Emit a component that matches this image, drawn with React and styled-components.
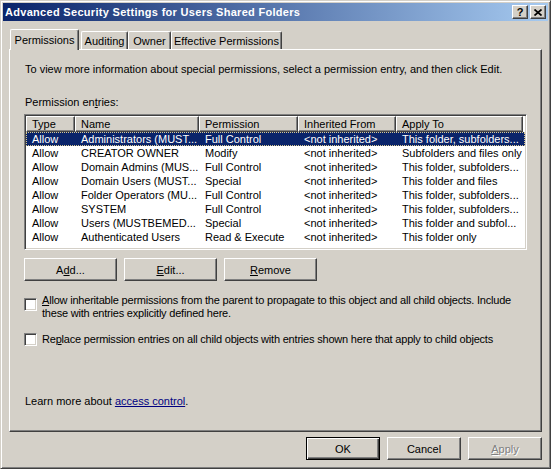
import React from "react";
import styled, { createGlobalStyle } from "styled-components";

const Global = createGlobalStyle`
  * { box-sizing: border-box; }
  body {
    margin: 0;
    background: #d4d0c8;
    font-family: "Liberation Sans", Arial, sans-serif;
    font-size: 11px;
    color: #000;
  }
`;

const face = "#d4d0c8";

const Window = styled.div`
  width: 551px;
  height: 469px;
  display: flex;
  flex-direction: column;
  background: ${face};
  border: 1px solid;
  border-color: ${face} #404040 #404040 ${face};
  box-shadow: inset 1px 1px #fff, inset -1px -1px #808080;
  padding: 2px;
`;

const TitleBar = styled.div`
  height: 18px;
  display: flex;
  align-items: center;
  padding: 0 2px 0 2px;
  background: linear-gradient(to right, #0a246a, #a6caf0);
`;

const Title = styled.div`
  flex: 1;
  color: #fff;
  font-weight: bold;
  font-size: 11px;
  letter-spacing: 0.3px;
  white-space: nowrap;
`;

const CaptionButton = styled.div`
  width: 16px;
  height: 14px;
  margin-left: ${(p) => (p.$gap ? "2px" : "0")};
  display: flex;
  align-items: center;
  justify-content: center;
  background: ${face};
  border: 1px solid;
  border-color: #fff #404040 #404040 #fff;
  box-shadow: inset -1px -1px #808080;
  font-weight: bold;
  font-size: 11px;
  line-height: 1;
`;

const Client = styled.div`
  flex: 1;
  display: flex;
  flex-direction: column;
  padding: 8px 6px 6px 6px;
`;

const TabStrip = styled.div`
  height: 20px;
  display: flex;
  align-items: flex-end;
  padding-left: 1px;
`;

const Tab = styled.div`
  position: relative;
  z-index: ${(p) => (p.$active ? 2 : 1)};
  width: ${(p) => p.$w}px;
  height: ${(p) => (p.$active ? 21 : 18)}px;
  margin-bottom: ${(p) => (p.$active ? "-1px" : "0")};
  margin-right: ${(p) => (p.$active ? "2px" : "0")};
  display: flex;
  align-items: center;
  justify-content: center;
  padding-bottom: ${(p) => (p.$active ? "1px" : "0")};
  background: ${face};
  border: 1px solid;
  border-bottom: none;
  border-color: #fff #404040 #404040 #fff;
  border-radius: 2px 2px 0 0;
  box-shadow: inset -1px 0 #808080;
  white-space: nowrap;
`;

const Panel = styled.div`
  height: 383px;
  display: flex;
  flex-direction: column;
  align-items: flex-start;
  padding: 13px 0 0 14px;
  border: 1px solid;
  border-color: #fff #404040 #404040 #fff;
  box-shadow: inset -1px -1px #808080;
`;

const Text = styled.div`
  line-height: 13px;
  margin-top: ${(p) => p.$mt || 0}px;
  padding-left: 1px;
  white-space: nowrap;
`;

const Key = styled.span`
  text-decoration: underline;
`;

const ListBox = styled.div`
  width: 503px;
  height: 136px;
  margin-top: 5px;
  background: #fff;
  border: 1px solid;
  border-color: #808080 #fff #fff #808080;
  box-shadow: inset 1px 1px #404040, inset -1px -1px ${face};
  padding: 1px;
`;

const cols = "49px 124px 99px 98px 127px";

const Header = styled.div`
  display: grid;
  grid-template-columns: ${cols};
  height: 16px;
`;

const HeaderCell = styled.div`
  background: ${face};
  border: 1px solid;
  border-color: #fff #404040 #404040 #fff;
  box-shadow: inset -1px -1px #808080;
  padding-left: 5px;
  line-height: 14px;
  white-space: nowrap;
  overflow: hidden;
`;

const Row = styled.div`
  display: grid;
  grid-template-columns: ${cols};
  height: 14px;
  line-height: 14px;
  background: ${(p) => (p.$selected ? "#0a246a" : "transparent")};
  color: ${(p) => (p.$selected ? "#fff" : "#000")};
  outline: ${(p) => (p.$selected ? "1px dotted #d8c890" : "none")};
  outline-offset: -1px;
`;

const Cell = styled.div`
  padding-left: 6px;
  white-space: nowrap;
  overflow: hidden;
`;

const ButtonRow = styled.div`
  display: flex;
  gap: 7px;
  margin-top: 8px;
`;

const Button = styled.div`
  width: ${(p) => p.$w}px;
  height: 23px;
  display: flex;
  align-items: center;
  justify-content: center;
  background: ${face};
  border: 1px solid;
  border-color: ${(p) => (p.$default ? "#000" : "#fff #404040 #404040 #fff")};
  box-shadow: ${(p) =>
    p.$default
      ? "inset 1px 1px #fff, inset -1px -1px #404040, inset -2px -2px #808080"
      : "inset -1px -1px #808080"};
  color: ${(p) => (p.$disabled ? "#808080" : "#000")};
  text-shadow: ${(p) => (p.$disabled ? "1px 1px #fff" : "none")};
  white-space: nowrap;
`;

const CheckRow = styled.div`
  display: flex;
  align-items: flex-start;
  gap: 5px;
  margin-top: ${(p) => p.$mt}px;
`;

const CheckBox = styled.div`
  flex: none;
  width: 13px;
  height: 13px;
  margin-top: ${(p) => p.$mt || 0}px;
  background: #fff;
  border: 1px solid;
  border-color: #808080 #fff #fff #808080;
  box-shadow: inset 1px 1px #404040, inset -1px -1px ${face};
`;

const CheckLabel = styled.div`
  line-height: 13px;
  letter-spacing: -0.2px;
  white-space: nowrap;
`;

const Link = styled.span`
  color: #000080;
  text-decoration: underline;
`;

const Footer = styled.div`
  display: flex;
  justify-content: flex-end;
  gap: 7px;
  margin-top: 5px;
`;

const rows = [
  ["Allow", "Administrators (MUST...", "Full Control", "<not inherited>", "This folder, subfolders..."],
  ["Allow", "CREATOR OWNER", "Modify", "<not inherited>", "Subfolders and files only"],
  ["Allow", "Domain Admins (MUS...", "Full Control", "<not inherited>", "This folder, subfolders..."],
  ["Allow", "Domain Users (MUST...", "Special", "<not inherited>", "This folder and files"],
  ["Allow", "Folder Operators (MU...", "Full Control", "<not inherited>", "This folder, subfolders..."],
  ["Allow", "SYSTEM", "Full Control", "<not inherited>", "This folder, subfolders..."],
  ["Allow", "Users (MUSTBEMED...", "Special", "<not inherited>", "This folder and subfol..."],
  ["Allow", "Authenticated Users", "Read & Execute", "<not inherited>", "This folder only"],
];

const CloseGlyph = () => (
  <svg width="8" height="7" viewBox="0 0 8 7">
    <path d="M0.5 0.5 L7.5 6.5 M7.5 0.5 L0.5 6.5" stroke="#000" strokeWidth="1.7" />
  </svg>
);

export default function App() {
  return (
    <>
      <Global />
      <Window>
        <TitleBar>
          <Title>Advanced Security Settings for Users Shared Folders</Title>
          <CaptionButton>?</CaptionButton>
          <CaptionButton $gap>
            <CloseGlyph />
          </CaptionButton>
        </TitleBar>
        <Client>
          <TabStrip>
            <Tab $active $w={69}>Permissions</Tab>
            <Tab $w={47}>Auditing</Tab>
            <Tab $w={43}>Owner</Tab>
            <Tab $w={111}>Effective Permissions</Tab>
          </TabStrip>
          <Panel>
            <Text>
              To view more information about special permissions, select a permission entry, and then click Edit.
            </Text>
            <Text $mt={20}>
              Permission en<Key>t</Key>ries:
            </Text>
            <ListBox>
              <Header>
                <HeaderCell>Type</HeaderCell>
                <HeaderCell>Name</HeaderCell>
                <HeaderCell>Permission</HeaderCell>
                <HeaderCell>Inherited From</HeaderCell>
                <HeaderCell>Apply To</HeaderCell>
              </Header>
              {rows.map((r, i) => (
                <Row key={i} $selected={i === 0}>
                  {r.map((c, j) => (
                    <Cell key={j}>{c}</Cell>
                  ))}
                </Row>
              ))}
            </ListBox>
            <ButtonRow>
              <Button $w={93}>
                A<Key>d</Key>d...
              </Button>
              <Button $w={93}>
                <Key>E</Key>dit...
              </Button>
              <Button $w={93}>
                <Key>R</Key>emove
              </Button>
            </ButtonRow>
            <CheckRow $mt={13}>
              <CheckBox $mt={4} />
              <CheckLabel>
                <Key>A</Key>llow inheritable permissions from the parent to propagate to this object and all child objects. Include
                <br />
                these with entries explicitly defined here.
              </CheckLabel>
            </CheckRow>
            <CheckRow $mt={13}>
              <CheckBox />
              <CheckLabel>
                Re<Key>p</Key>lace permission entries on all child objects with entries shown here that apply to child objects
              </CheckLabel>
            </CheckRow>
            <Text $mt={49}>
              Learn more about <Link>access control</Link>.
            </Text>
          </Panel>
          <Footer>
            <Button $w={74} $default>OK</Button>
            <Button $w={74}>Cancel</Button>
            <Button $w={74} $disabled>
              <Key>A</Key>pply
            </Button>
          </Footer>
        </Client>
      </Window>
    </>
  );
}
